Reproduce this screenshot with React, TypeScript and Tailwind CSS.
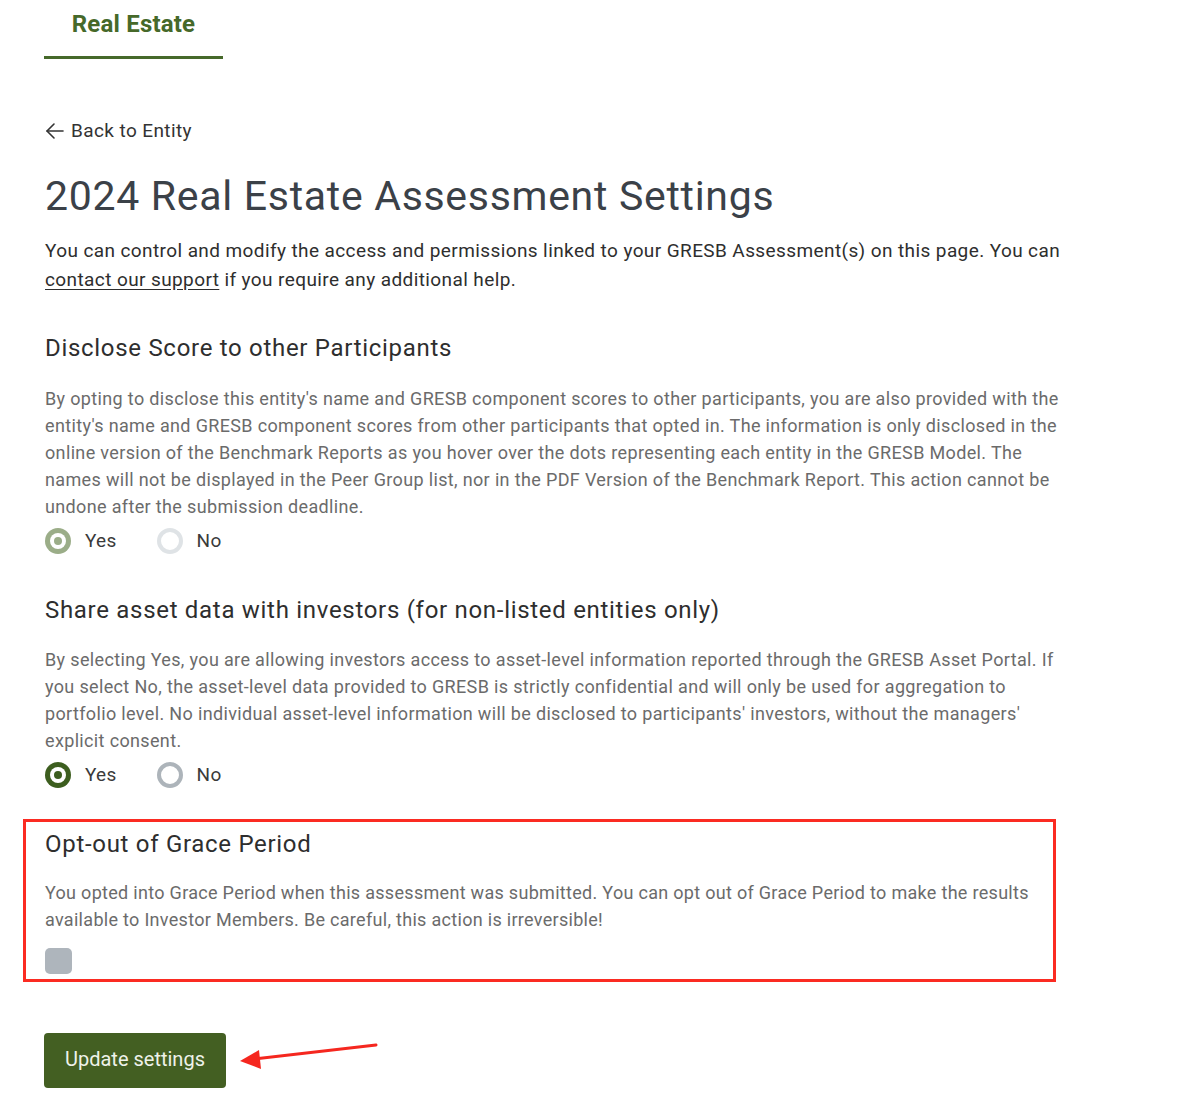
import React from "react";

function Radio({ checked, variant }: { checked: boolean; variant: "muted" | "active" }) {
  if (variant === "muted") {
    return checked ? (
      <span className="flex h-[26px] w-[26px] items-center justify-center rounded-full bg-[#9bad88]">
        <span className="flex h-[16px] w-[16px] items-center justify-center rounded-full bg-white">
          <span className="h-[8px] w-[8px] rounded-full bg-[#9bad88]" />
        </span>
      </span>
    ) : (
      <span className="h-[26px] w-[26px] rounded-full border-[4px] border-[#dfe3e6] bg-white" />
    );
  }
  return checked ? (
    <span className="flex h-[26px] w-[26px] items-center justify-center rounded-full bg-[#3d5e1f]">
      <span className="flex h-[16px] w-[16px] items-center justify-center rounded-full bg-white">
        <span className="h-[8px] w-[8px] rounded-full bg-[#3d5e1f]" />
      </span>
    </span>
  ) : (
    <span className="h-[26px] w-[26px] rounded-full border-[4px] border-[#adb4ba] bg-white" />
  );
}

function RadioRow({ variant }: { variant: "muted" | "active" }) {
  return (
    <div className="mt-[7px] flex items-center text-[19px] tracking-[0.3px]">
      <label className="flex items-center gap-[14px]">
        <Radio checked variant={variant} />
        <span className="text-[#3a3a3a]">Yes</span>
      </label>
      <label className="ml-[40px] flex items-center gap-[14px]">
        <Radio checked={false} variant={variant} />
        <span className="text-[#3a3a3a]">No</span>
      </label>
    </div>
  );
}

export default function App() {
  return (
    <div
      className="min-h-[1112px] w-[1200px] bg-white text-[#333]"
      style={{ fontFamily: "Roboto, 'Liberation Sans', sans-serif" }}
    >
      {/* Tab */}
      <div className="pl-[44px]">
        <div className="inline-flex w-[179px] flex-col">
          <div className="pt-[9px] text-center text-[24px] font-bold leading-[30px] tracking-[0.2px] text-[#46692a]">
            Real Estate
          </div>
          <div className="mt-[17px] h-[3px] w-full bg-[#46692a]" />
        </div>
      </div>

      <div className="px-[45px]">
        {/* Back link */}
        <div className="mt-[59px] flex items-center gap-[6px] text-[19px] leading-[26px] tracking-[0.4px] text-[#333]">
          <svg width="20" height="20" viewBox="0 0 20 20" fill="none" stroke="#333" strokeWidth="1.6" strokeLinecap="round" strokeLinejoin="round">
            <path d="M18 10H2" />
            <path d="M9 3L2 10L9 17" />
          </svg>
          <span>Back to Entity</span>
        </div>

        <h1 className="mt-[26px] whitespace-nowrap text-[41px] font-normal leading-[52px] tracking-[0.7px] text-[#3b4148]">
          2024 Real Estate Assessment Settings
        </h1>

        <p className="mt-[14px] whitespace-nowrap text-[19px] leading-[29px] tracking-[0.4px] text-[#2e2e2e]">
          You can control and modify the access and permissions linked to your GRESB Assessment(s) on this page. You can
          <br />
          <a className="underline underline-offset-[3px]">contact our support</a> if you require any additional help.
        </p>

        {/* Section 1 */}
        <h2 className="mt-[38px] whitespace-nowrap text-[24px] font-normal leading-[32px] tracking-[0.7px] text-[#2e2e2e]">
          Disclose Score to other Participants
        </h2>
        <p className="mt-[21px] whitespace-nowrap text-[18px] leading-[27px] tracking-[0.35px] text-[#6b6b6b]">
          By opting to disclose this entity's name and GRESB component scores to other participants, you are also provided with the
          <br />
          entity's name and GRESB component scores from other participants that opted in. The information is only disclosed in the
          <br />
          online version of the Benchmark Reports as you hover over the dots representing each entity in the GRESB Model. The
          <br />
          names will not be displayed in the Peer Group list, nor in the PDF Version of the Benchmark Report. This action cannot be
          <br />
          undone after the submission deadline.
        </p>
        <RadioRow variant="muted" />

        {/* Section 2 */}
        <h2 className="mt-[38px] whitespace-nowrap text-[24px] font-normal leading-[32px] tracking-[0.7px] text-[#2e2e2e]">
          Share asset data with investors (for non-listed entities only)
        </h2>
        <p className="mt-[20px] whitespace-nowrap text-[18px] leading-[27px] tracking-[0.35px] text-[#6b6b6b]">
          By selecting Yes, you are allowing investors access to asset-level information reported through the GRESB Asset Portal. If
          <br />
          you select No, the asset-level data provided to GRESB is strictly confidential and will only be used for aggregation to
          <br />
          portfolio level. No individual asset-level information will be disclosed to participants' investors, without the managers'
          <br />
          explicit consent.
        </p>
        <RadioRow variant="active" />
      </div>

      {/* Highlighted section */}
      <div className="ml-[23px] mt-[30px] w-[1033px] border-[3px] border-[#fb2b22] pb-[5px] pl-[19px] pt-[6px]">
        <h2 className="whitespace-nowrap text-[24px] font-normal leading-[32px] tracking-[0.7px] text-[#2e2e2e]">
          Opt-out of Grace Period
        </h2>
        <p className="mt-[19px] whitespace-nowrap text-[18px] leading-[27px] tracking-[0.3px] text-[#6b6b6b]">
          You opted into Grace Period when this assessment was submitted. You can opt out of Grace Period to make the results
          <br />
          available to Investor Members. Be careful, this action is irreversible!
        </p>
        <div className="mt-[15px] h-[26px] w-[27px] rounded-[5px] bg-[#aeb5bc]" />
      </div>

      {/* Button + arrow */}
      <div className="relative mt-[51px] pl-[44px]">
        <button className="h-[55px] w-[182px] rounded-[4px] bg-[#435f22] pb-[4px] text-[20px] text-[#eef2ea]">
          Update settings
        </button>
        <svg className="absolute left-[236px] top-[8px]" width="145" height="30" viewBox="0 0 145 30" fill="none">
          <path d="M140 4L18 18" stroke="#f5271f" strokeWidth="3" strokeLinecap="round" />
          <path d="M4 20L23 9L25 28Z" fill="#f5271f" />
        </svg>
      </div>
    </div>
  );
}
